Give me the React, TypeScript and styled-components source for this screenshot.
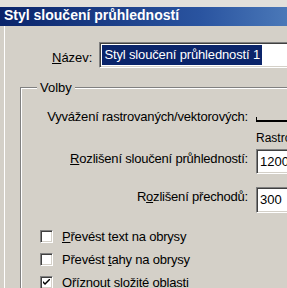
import React from 'react';
import styled, { createGlobalStyle, css } from 'styled-components';

const GlobalStyle = createGlobalStyle`
  html, body {
    margin: 0;
    padding: 0;
    background: #d4d0c8;
    overflow: hidden;
  }
  body {
    font-family: 'Liberation Sans', Arial, sans-serif;
    color: #000;
  }
`;

// classic 3D sunken edge (inputs, checkboxes)
const sunken = css`
  box-sizing: border-box;
  border: 1px solid;
  border-color: #808080 #ffffff #ffffff #808080;
  box-shadow: inset 1px 1px 0 #404040, inset -1px -1px 0 #d4d0c8;
  background: #ffffff;
`;

const Window = styled.div`
  width: 287px;
  height: 288px;
  overflow: hidden;
  background: #d4d0c8;
  display: flex;
  flex-direction: column;
`;

const TopFrame = styled.div`
  height: 7px;
  flex-shrink: 0;
  background: #e2e0db;
`;

const TitleBar = styled.div`
  height: 17px;
  padding: 0 0 2px 4px;
  flex-shrink: 0;
  background: linear-gradient(to right, #0a246a 0%, #2a54a0 70%, #4a78b8 100%);
  color: #ffffff;
  font-weight: 700;
  font-size: 14px;
  line-height: 17px;
  white-space: nowrap;
`;

const Body = styled.div`
  flex: 1;
  margin-left: 4px;
  border-left: 1px solid #ffffff;
  padding-top: 16px;
`;

const NameRow = styled.div`
  display: flex;
  align-items: flex-start;
  gap: 7px;
  padding-left: 47px;
`;

const Label = styled.label<{ $pad?: number }>`
  font-size: 13px;
  line-height: 15px;
  white-space: nowrap;
  padding-top: ${(p) => p.$pad ?? 0}px;
`;

const NameField = styled.div`
  ${sunken};
  width: 220px;
  height: 26px;
  flex-shrink: 0;
  padding: 2px;
`;

const Selection = styled.span`
  display: inline-block;
  background: #0a246a;
  color: #ffffff;
  font-size: 13px;
  line-height: 20px;
  padding: 0 2px;
  letter-spacing: -0.15px;
  white-space: nowrap;
`;

const Group = styled.fieldset`
  margin: 12px 0 0 15px;
  padding: 0;
  width: 320px;
  min-width: 0;
  border: 1px solid #808080;
  box-shadow: inset 1px 1px 0 #ffffff, 1px 1px 0 #ffffff;
`;

const Legend = styled.legend`
  margin-left: 16px;
  padding: 0 3px;
  background: #d4d0c8;
  font-size: 13px;
  line-height: 15px;
`;

const FieldRow = styled.div<{ $top: number }>`
  display: flex;
  align-items: flex-start;
  column-gap: 8px;
  margin-top: ${(p) => p.$top}px;
`;

const FieldLabel = styled.label<{ $pad?: number }>`
  width: 227px;
  flex-shrink: 0;
  text-align: right;
  white-space: nowrap;
  font-size: 13px;
  line-height: 15px;
  letter-spacing: -0.2px;
  padding-top: ${(p) => p.$pad ?? 0}px;
`;

const Track = styled.svg`
  display: block;
  width: 40px;
  height: 15px;
  flex-shrink: 0;
`;

const Hint = styled.span`
  font-size: 12px;
  line-height: 14px;
  white-space: nowrap;
`;

const NumberField = styled.div<{ $h: number }>`
  ${sunken};
  width: 60px;
  height: ${(p) => p.$h}px;
  flex-shrink: 0;
  padding: 4px 0 0 3px;
  font-size: 13px;
  line-height: 15px;
`;

const CheckList = styled.div`
  display: flex;
  flex-direction: column;
  gap: 8px;
  margin-top: 16px;
  padding-left: 19px;
`;

const CheckRow = styled.label`
  display: flex;
  align-items: center;
  gap: 9px;
  font-size: 13px;
  line-height: 15px;
  white-space: nowrap;
  letter-spacing: -0.2px;
`;

const Box = styled.span`
  ${sunken};
  width: 13px;
  height: 13px;
  flex-shrink: 0;
  display: flex;
  align-items: center;
  justify-content: center;
`;

const Check = ({ checked }: { checked?: boolean }) => (
  <Box>
    {checked && (
      <svg width="7" height="7" viewBox="0 0 7 7">
        <path d="M0 2 L0 4 L2 6 L7 1 L7 -1 L2 4 Z" fill="#000" />
      </svg>
    )}
  </Box>
);

export default function App() {
  return (
    <>
      <GlobalStyle />
      <Window>
        <TopFrame />
        <TitleBar>Styl sloučení průhledností</TitleBar>
        <Body>
          <NameRow>
            <Label $pad={8}>
              <u>N</u>ázev:
            </Label>
            <NameField>
              <Selection>Styl sloučení průhledností 1</Selection>
            </NameField>
          </NameRow>

          <Group>
            <Legend>Volby</Legend>

            <FieldRow $top={14}>
              <FieldLabel>Vyvážení rastrovaných/vektorových:</FieldLabel>
              <Track viewBox="0 0 40 15">
                <rect x="0" y="8" width="1" height="5" fill="#000" />
                <rect x="0" y="11" width="40" height="2" fill="#000" />
              </Track>
            </FieldRow>

            <FieldRow $top={7}>
              <FieldLabel />
              <Hint>Rastrované</Hint>
            </FieldRow>

            <FieldRow $top={4}>
              <FieldLabel $pad={2}>
                <u>R</u>ozlišení sloučení průhledností:
              </FieldLabel>
              <NumberField $h={25}>1200</NumberField>
            </FieldRow>

            <FieldRow $top={13}>
              <FieldLabel $pad={2}>
                R<u>o</u>zlišení přechodů:
              </FieldLabel>
              <NumberField $h={26}>300</NumberField>
            </FieldRow>

            <CheckList>
              <CheckRow>
                <Check />
                <span>
                  <u>P</u>řevést text na obrysy
                </span>
              </CheckRow>
              <CheckRow>
                <Check />
                <span>
                  Převést <u>t</u>ahy na obrysy
                </span>
              </CheckRow>
              <CheckRow>
                <Check checked />
                <span>Oříznout složité oblasti</span>
              </CheckRow>
            </CheckList>
          </Group>
        </Body>
      </Window>
    </>
  );
}
